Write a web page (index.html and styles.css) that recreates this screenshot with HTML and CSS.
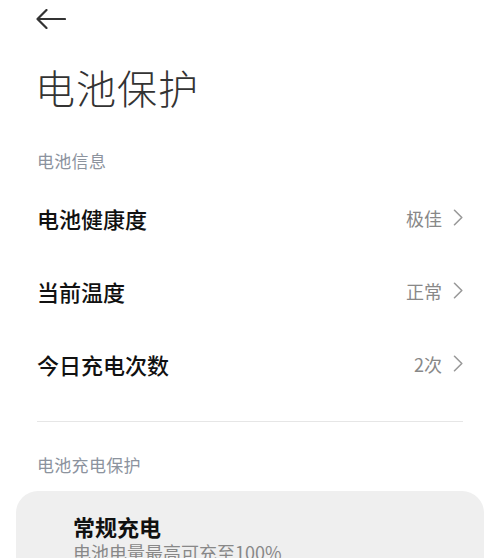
FILE: index.html
```html
<!DOCTYPE html>
<html lang="zh-CN">
<head>
<meta charset="utf-8">
<link rel="stylesheet" href="styles.css">
</head>
<body>
<div class="page">
  <div class="topbar">
    <svg class="back" width="30" height="20" viewBox="0 0 30 20">
      <path d="M1.5 10 H29 M10.5 1 L1.5 10 L10.5 19" fill="none" stroke="#333" stroke-width="2.2" stroke-linecap="round" stroke-linejoin="round"/>
    </svg>
  </div>
  <h1 class="title">电池保护</h1>
  <div class="section-label">电池信息</div>
  <div class="list">
    <div class="row">
      <span class="row-name">电池健康度</span>
      <span class="row-value">极佳<svg class="chev" width="10" height="17" viewBox="0 0 10 17"><path d="M1.5 1.3 L8.8 8.5 L1.5 15.7" fill="none" stroke="#999" stroke-width="1.6" stroke-linecap="round" stroke-linejoin="round"/></svg></span>
    </div>
    <div class="row">
      <span class="row-name">当前温度</span>
      <span class="row-value">正常<svg class="chev" width="10" height="17" viewBox="0 0 10 17"><path d="M1.5 1.3 L8.8 8.5 L1.5 15.7" fill="none" stroke="#999" stroke-width="1.6" stroke-linecap="round" stroke-linejoin="round"/></svg></span>
    </div>
    <div class="row">
      <span class="row-name">今日充电次数</span>
      <span class="row-value">2次<svg class="chev" width="10" height="17" viewBox="0 0 10 17"><path d="M1.5 1.3 L8.8 8.5 L1.5 15.7" fill="none" stroke="#999" stroke-width="1.6" stroke-linecap="round" stroke-linejoin="round"/></svg></span>
    </div>
  </div>
  <div class="divider"></div>
  <div class="section-label section-label-2">电池充电保护</div>
  <div class="card">
    <div class="card-title">常规充电</div>
    <div class="card-sub">电池电量最高可充至100%</div>
  </div>
</div>
</body>
</html>
```
FILE: styles.css
```css
* { box-sizing: border-box; }
html, body {
  margin: 0;
  padding: 0;
  background: #ffffff;
}
body {
  font-family: "Noto Sans CJK SC", "Noto Sans", sans-serif;
  overflow: hidden;
  height: 558px;
}
.page {
  display: flex;
  flex-direction: column;
  padding: 0 37px;
}
.topbar {
  height: 38px;
  display: flex;
  align-items: center;
}
.back {
  display: block;
  margin-left: -1px;
}
.title {
  margin: 28px 0 0 -2px;
  font-size: 40px;
  line-height: 42px;
  font-weight: 300;
  color: #333;
  letter-spacing: 1px;
}
.section-label {
  margin-top: 42px;
  font-size: 17px;
  line-height: 22px;
  color: #8c939e;
  letter-spacing: 0.3px;
}
.list {
  margin-top: 9px;
  display: flex;
  flex-direction: column;
}
.row {
  height: 73px;
  display: flex;
  align-items: center;
  justify-content: space-between;
}
.row-name {
  font-size: 22px;
  font-weight: 500;
  color: #111;
}
.row-value {
  display: flex;
  align-items: center;
  gap: 11px;
  font-size: 18px;
  color: #888;
}
.chev { display: block; }
.divider {
  margin-top: 21px;
  height: 1px;
  background: #e6e6e6;
}
.section-label-2 {
  margin-top: 32px;
}
.card {
  margin: 15px -21px 0;
  background: #efefef;
  border-radius: 22px;
  padding: 22px 36px 20px 57px;
  height: 120px;
}
.card-title {
  font-size: 22px;
  line-height: 26px;
  font-weight: 700;
  color: #111;
}
.card-sub {
  font-size: 18px;
  line-height: 26px;
  color: #888;
}
```
